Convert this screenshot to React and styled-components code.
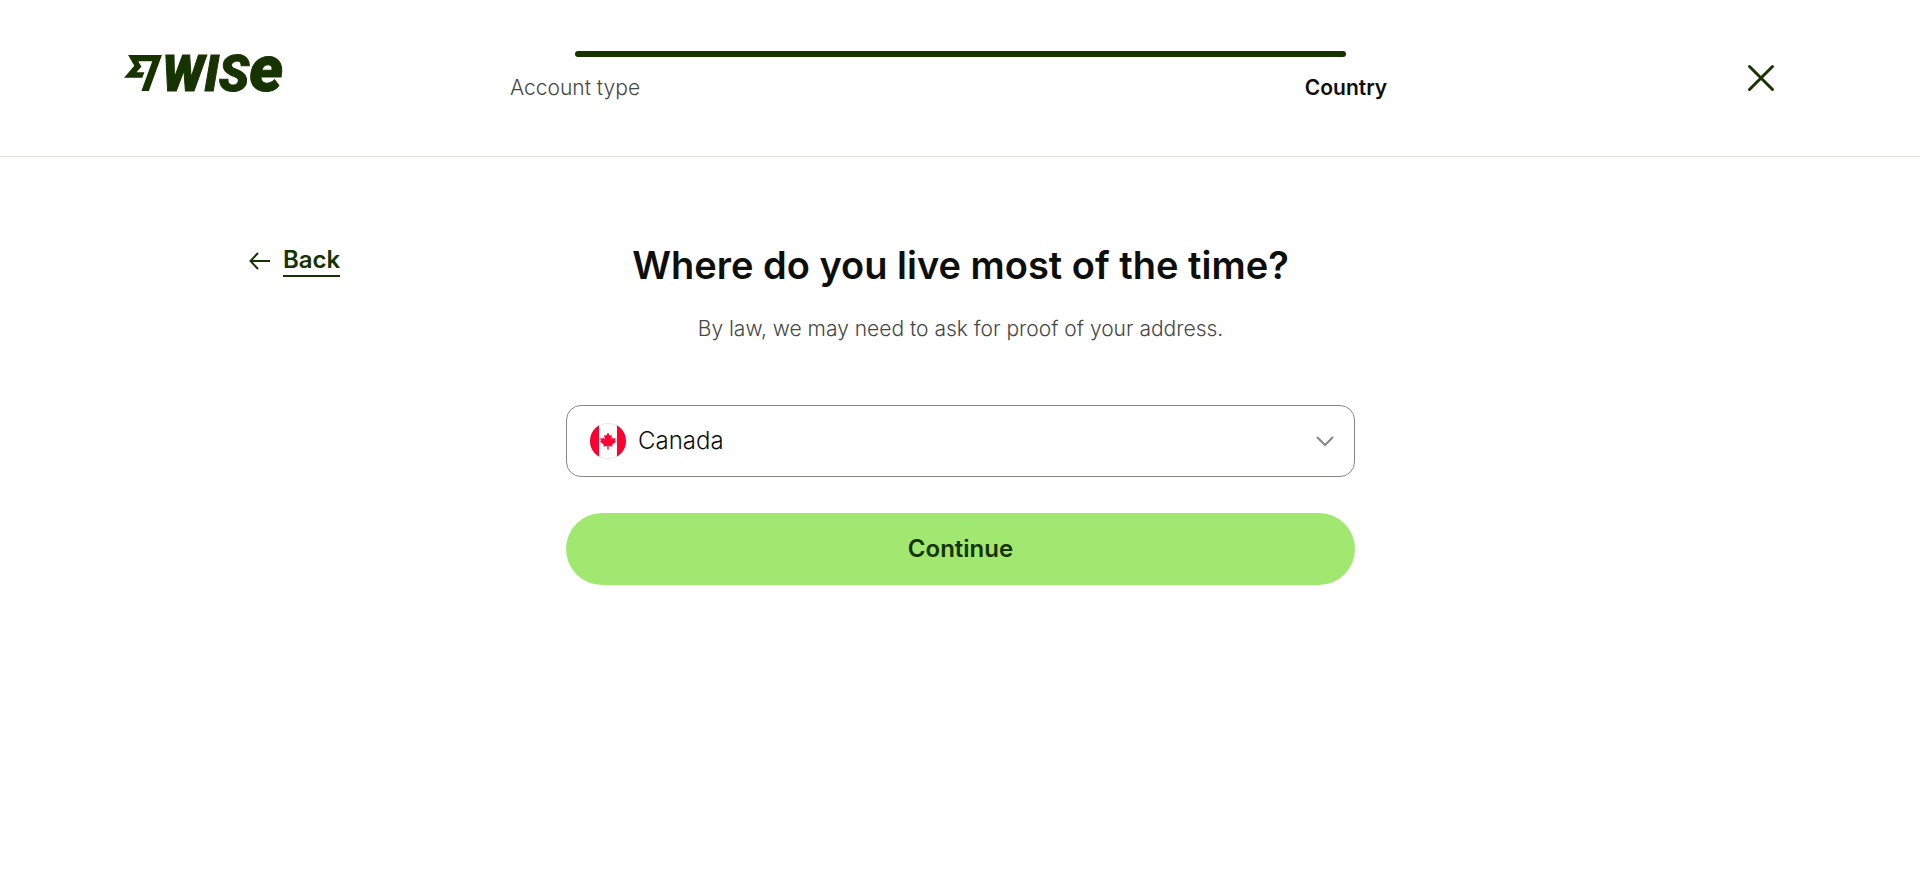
import React, { useState } from 'react';

import styled, { createGlobalStyle } from 'styled-components';

const countries = ['Canada', 'United Kingdom', 'United States', 'Australia'];

const App = () => {
  const [country, setCountry] = useState('Canada');
  return (
    <>
      <GlobalStyle />
      <Header>
        <Logo href="#" aria-label="Wise">
          <LogoMark viewBox="0 0.6 24 22.8" aria-hidden="true">
            <path d="M6.488 7.469 0 15.05h11.585l1.301-3.576H7.922l3.033-3.507.01-.092L8.993 4.48h8.873l-6.878 18.925h4.706L24 .595H2.543l3.945 6.874Z" />
          </LogoMark>
          <Wordmark>
            WIS<WordmarkSmall>e</WordmarkSmall>
          </Wordmark>
        </Logo>
        <Stepper aria-label="Progress">
          <Bar />
          <Steps>
            <Step>Account type</Step>
            <Step $active aria-current="step">
              Country
            </Step>
          </Steps>
        </Stepper>
        <CloseButton type="button" aria-label="Close">
          <svg width="36" height="36" viewBox="0 0 36 36" aria-hidden="true">
            <path d="M6.5 6.5 29.5 29.5M29.5 6.5 6.5 29.5" />
          </svg>
        </CloseButton>
      </Header>
      <Main>
        <BackLink href="#">
          <svg width="22" height="20" viewBox="0 0 22 20" aria-hidden="true">
            <path d="M9 2 1.5 10 9 18M1.5 10H21" />
          </svg>
          <span>Back</span>
        </BackLink>
        <Form onSubmit={(e) => e.preventDefault()}>
          <Title id="title">Where do you live most of the time?</Title>
          <Hint>By law, we may need to ask for proof of your address.</Hint>
          <SelectBox>
            <Select
              aria-labelledby="title"
              value={country}
              onChange={(e) => setCountry(e.target.value)}
            >
              {countries.map((name) => (
                <option key={name}>{name}</option>
              ))}
            </Select>
            {country === 'Canada' && (
              <Flag viewBox="0 0 36 36" aria-hidden="true">
                <clipPath id="round">
                  <circle cx="18" cy="18" r="18" />
                </clipPath>
                <g clipPath="url(#round)">
                  <path fill="#fff" d="M0 0h36v36H0z" />
                  <path fill="#ff0033" d="M0 0h9v36H0zM27 0h9v36h-9z" />
                  <path
                    fill="#ff0033"
                    d="M18 10l-1.8 3.1-1.8-.9.9 4.5-2-2-.5 1.2-2.3-.4.8 2.4-1.1.7 4 3.2-.5 1.5 3.9-.5v3.5h.8v-3.5l3.9.5-.5-1.5 4-3.2-1.1-.7.8-2.4-2.3.4-.5-1.2-2 2 .9-4.5-1.8.9z"
                    stroke="#ff0033"
                    strokeWidth="0.5"
                  />
                </g>
                <circle cx="18" cy="18" r="17.5" fill="none" stroke="#000" strokeOpacity="0.1" />
              </Flag>
            )}
            <Chevron viewBox="0 0 20 12" aria-hidden="true">
              <path d="M2 2 10 10 18 2" />
            </Chevron>
          </SelectBox>
          <Submit type="submit">Continue</Submit>
        </Form>
      </Main>
    </>
  );
};

const GlobalStyle = createGlobalStyle`
  * {
    box-sizing: border-box;
  }

  body {
    margin: 0;
    background: #fff;
    color: #0e0f0c;
    font-family: Inter, "Liberation Sans", sans-serif;
  }
`;

const Header = styled.header`
  display: grid;
  grid-template-columns: 1fr minmax(0, 901px) 1fr;
  align-items: start;
  padding: 42px 123px 42px 124px;
  border-bottom: 1px solid #e2e4e1;
`;

const Logo = styled.a`
  display: flex;
  align-items: center;
  height: 62px;
  color: #163300;
  text-decoration: none;
`;

const LogoMark = styled.svg`
  width: 38px;
  height: 36px;
  fill: currentColor;
`;

const Wordmark = styled.span`
  padding-bottom: 2px;
  font-family: Roboto, sans-serif;
  font-size: 50px;
  font-style: italic;
  font-weight: 900;
  line-height: 62px;
  -webkit-text-stroke: 1px currentColor;
`;

const WordmarkSmall = styled.span`
  font-size: 64px;
`;

const Stepper = styled.nav`
  padding-top: 9px;
`;

const Bar = styled.div`
  height: 6px;
  margin: 0 65px;
  border-radius: 3px;
  background: #163300;
`;

const Steps = styled.ol`
  display: flex;
  justify-content: space-between;
  margin: 0;
  padding: 15px 0 0;
  list-style: none;
`;

const Step = styled.li`
  width: 130px;
  font-size: 21px;
  font-weight: ${({ $active }) => ($active ? 600 : 300)};
  line-height: 32px;
  text-align: center;
  white-space: nowrap;
  color: ${({ $active }) => ($active ? '#0e0f0c' : '#454745')};
`;

const CloseButton = styled.button`
  display: flex;
  align-items: center;
  justify-content: center;
  justify-self: end;
  width: 72px;
  height: 72px;
  padding: 0;
  border: 0;
  background: none;
  cursor: pointer;

  path {
    stroke: #163300;
    stroke-width: 3;
    stroke-linecap: round;
  }
`;

const Main = styled.main`
  display: grid;
  grid-template-columns: 1fr minmax(0, 789px) 1fr;
  align-items: start;
  padding: 84px 248px 84px 249px;
`;

const BackLink = styled.a`
  display: flex;
  align-items: center;
  justify-self: start;
  gap: 12px;
  padding-top: 4px;
  font-size: 24px;
  font-weight: 600;
  line-height: 30px;
  color: #163300;
  text-decoration: none;

  span {
    border-bottom: 2px solid currentColor;
  }

  path {
    fill: none;
    stroke: currentColor;
    stroke-width: 2;
  }
`;

const Form = styled.form`
  display: flex;
  flex-direction: column;
`;

const Title = styled.h1`
  margin: 0;
  font-size: 38px;
  font-weight: 600;
  line-height: 48px;
  text-align: center;
`;

const Hint = styled.p`
  margin: 24px 0 60px;
  font-size: 21px;
  font-weight: 300;
  line-height: 32px;
  text-align: center;
  color: #454745;
`;

const SelectBox = styled.div`
  position: relative;
`;

const Select = styled.select`
  width: 100%;
  height: 72px;
  padding: 0 64px 2px 71px;
  border: 1px solid #868685;
  border-radius: 15px;
  appearance: none;
  background: #fff;
  color: #0e0f0c;
  font: inherit;
  font-size: 24px;
  font-weight: 300;
`;

const Flag = styled.svg`
  position: absolute;
  top: 18px;
  left: 24px;
  width: 36px;
  height: 36px;
  pointer-events: none;
`;

const Chevron = styled.svg`
  position: absolute;
  top: 30px;
  right: 20px;
  width: 20px;
  height: 12px;
  fill: none;
  stroke: #868685;
  stroke-width: 2;
  pointer-events: none;
`;

const Submit = styled.button`
  height: 72px;
  margin-top: 36px;
  padding: 0 0 2px;
  border: 0;
  border-radius: 36px;
  background: #a0e870;
  color: #163300;
  font: inherit;
  font-size: 24px;
  font-weight: 600;
  cursor: pointer;
`;

export default App;
